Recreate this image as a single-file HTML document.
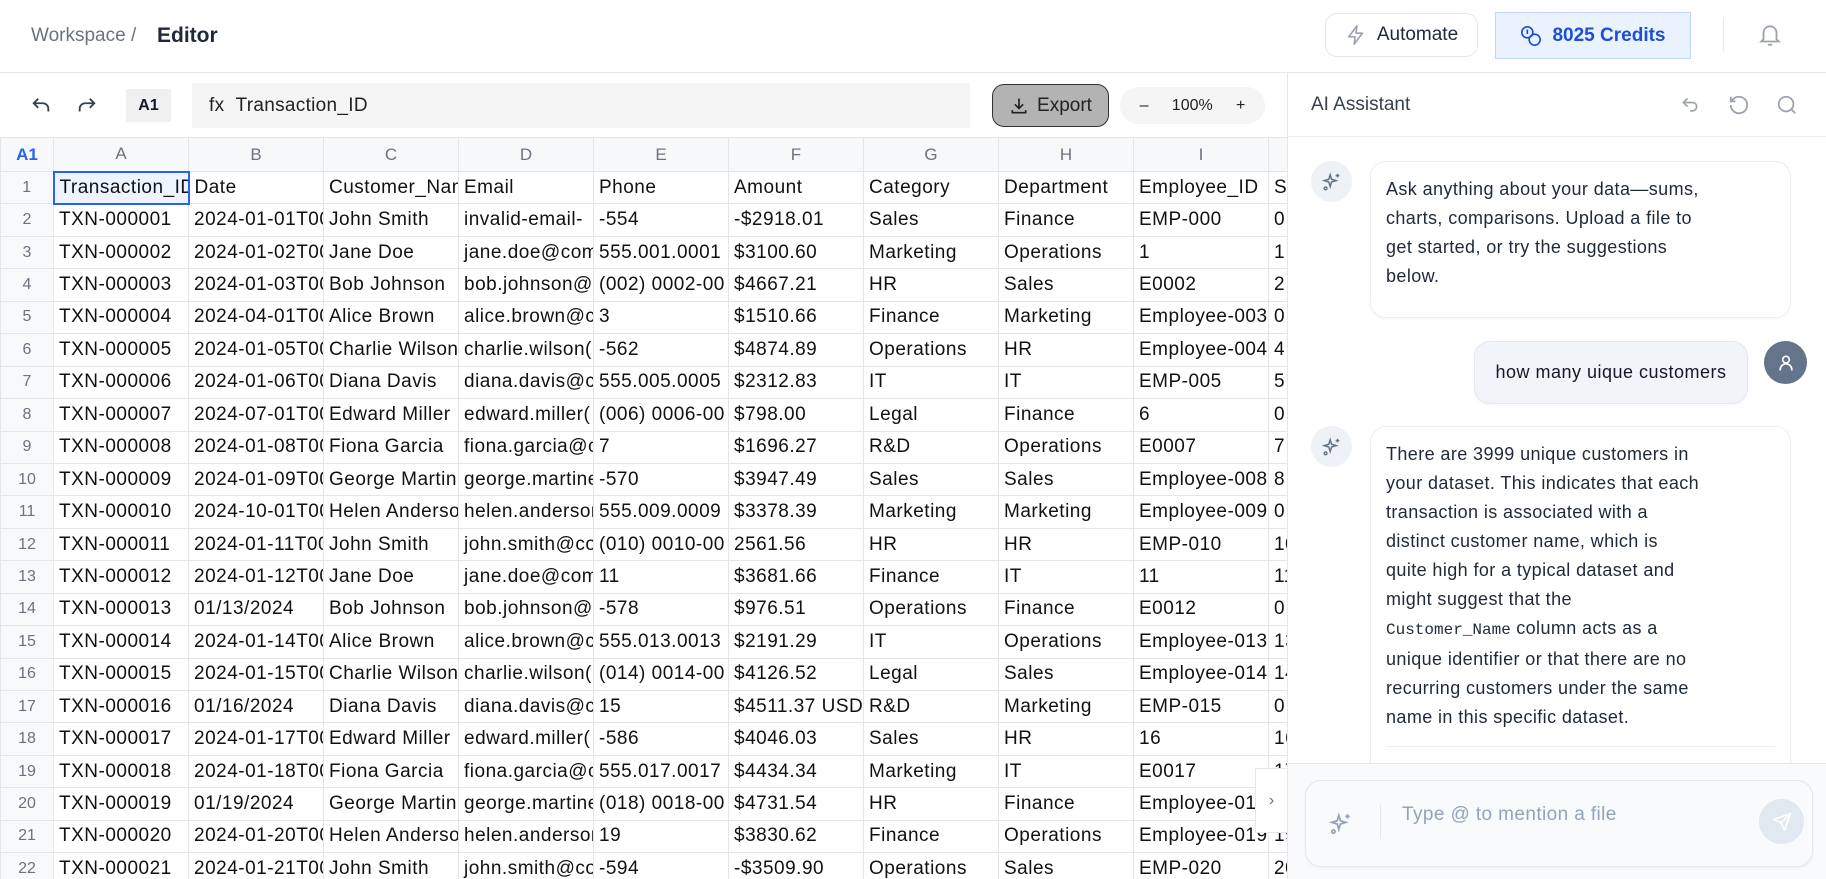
<!DOCTYPE html>
<html><head><meta charset="utf-8"><style>
*{box-sizing:border-box;margin:0;padding:0}
body{width:1826px;height:879px;overflow:hidden;background:#fff;font-family:"Liberation Sans",sans-serif;color:#111827;position:relative}
.abs{position:absolute}
.hdr{left:0;top:0;width:1826px;height:73px;border-bottom:1px solid #e5e7eb}
.btn{display:flex;align-items:center;justify-content:center;gap:10px;font-size:19px}
table{border-collapse:collapse;table-layout:fixed;font-size:19px;letter-spacing:0.5px}
td{height:32.45px;border:1px solid #e3e5e8;white-space:nowrap;overflow:hidden;padding:0 5px;color:#111}
td.rn{background:#f8f9fb;color:#6b7280;text-align:center;padding:0;font-size:16px;letter-spacing:0}
tr.h td{background:#f7f8fa;color:#6b7280;text-align:center;height:34px;font-size:17px;letter-spacing:0}
.panel{left:1287px;top:73px;width:539px;height:806px;background:#fff;border-left:1px solid #e5e7eb}
.av{width:41px;height:41px;border-radius:50%;background:#eef1f6;display:flex;align-items:center;justify-content:center}
.bub{border:1px solid #eceef2;border-radius:16px;background:#fff;font-size:18px;letter-spacing:0.4px;line-height:29px;color:#1f2937;box-shadow:0 1px 3px rgba(0,0,0,.04)}
</style></head><body>
<div class="abs hdr">
  <div class="abs" style="left:31px;top:25px;font-size:19px;color:#6b7280">Workspace /</div>
  <div class="abs" style="left:157px;top:24px;font-size:21px;font-weight:bold;color:#1f2937">Editor</div>
  <div class="abs btn" style="left:1325px;top:13px;width:153px;height:44px;border:1px solid #e5e7eb;border-radius:12px;color:#1f2937">
    <svg width="22" height="22" viewBox="0 0 24 24" fill="none" stroke="#9ca3af" stroke-width="1.8" stroke-linejoin="round"><path d="M13 2L4 14h7l-1 8 9-12h-7l1-8z"/></svg>Automate</div>
  <div class="abs btn" style="left:1495px;top:12px;width:196px;height:47px;border:1px solid #bfd6fb;background:#eaf2fe;color:#1d4ed8;font-weight:bold">
    <svg width="22" height="22" viewBox="0 0 24 24" fill="none" stroke="#1d4ed8" stroke-width="1.8"><circle cx="8" cy="8" r="6"/><circle cx="16" cy="16" r="6"/><path d="M7 6h1v4"/></svg>8025 Credits</div>
  <div class="abs" style="left:1723px;top:18px;width:1px;height:34px;background:#e5e7eb"></div>
  <svg class="abs" style="left:1757px;top:22px" width="26" height="26" viewBox="0 0 24 24" fill="none" stroke="#9ca3af" stroke-width="1.7"><path d="M6 16V10a6 6 0 0 1 12 0v6l2 2H4z"/><path d="M10 21h4"/></svg>
</div>
<!-- toolbar -->
<svg class="abs" style="left:30px;top:95px" width="22" height="22" viewBox="0 0 24 24" fill="none" stroke="#374151" stroke-width="2"><path d="M9 14L4 9l5-5"/><path d="M4 9h10a6 6 0 0 1 6 6v3"/></svg>
<svg class="abs" style="left:76px;top:95px" width="22" height="22" viewBox="0 0 24 24" fill="none" stroke="#374151" stroke-width="2"><path d="M15 14l5-5-5-5"/><path d="M20 9H10a6 6 0 0 0-6 6v3"/></svg>
<div class="abs" style="left:126px;top:89px;width:45px;height:33px;background:#f0f0f0;font-size:16px;font-weight:bold;display:flex;align-items:center;justify-content:center">A1</div>
<div class="abs" style="left:192px;top:83px;width:778px;height:45px;background:#f5f5f5;font-size:19px;letter-spacing:0.3px;display:flex;align-items:center;padding-left:17px;color:#222">fx&nbsp;&nbsp;Transaction_ID</div>
<div class="abs btn" style="left:992px;top:84px;width:117px;height:43px;background:#b3b3b3;border:1.5px solid #333;border-radius:12px;color:#222;gap:8px">
  <svg width="20" height="20" viewBox="0 0 24 24" fill="none" stroke="#222" stroke-width="2"><path d="M12 3v12M7 10l5 5 5-5M4 17v3h16v-3"/></svg>Export</div>
<div class="abs" style="left:1120px;top:87px;width:145px;height:37px;background:#f5f5f5;border-radius:18px;font-size:16px;color:#222;display:flex;align-items:center;justify-content:space-around;padding:0 8px"><span>–</span><span>100%</span><span>+</span></div>
<!-- grid -->
<div class="abs" style="left:0;top:137px;width:1287px;height:742px;overflow:hidden">
<table style="width:1403px">
<colgroup><col style="width:53px"><col style="width:135px"><col style="width:135px"><col style="width:135px"><col style="width:135px"><col style="width:135px"><col style="width:135px"><col style="width:135px"><col style="width:135px"><col style="width:135px"><col style="width:135px"></colgroup>
<tr class="h"><td class="rn" style="color:#2563eb;font-weight:bold;background:#f7f8fa">A1</td><td>A</td><td>B</td><td>C</td><td>D</td><td>E</td><td>F</td><td>G</td><td>H</td><td>I</td><td></td></tr>
<tr><td class="rn">1</td><td style="border:2px solid #2563eb;background:#eef4ff">Transaction_ID</td><td>Date</td><td>Customer_Name</td><td>Email</td><td>Phone</td><td>Amount</td><td>Category</td><td>Department</td><td>Employee_ID</td><td>S</td></tr>
<tr><td class="rn">2</td><td>TXN-000001</td><td>2024-01-01T00</td><td>John Smith</td><td>invalid-email-</td><td>-554</td><td>-$2918.01</td><td>Sales</td><td>Finance</td><td>EMP-000</td><td>0</td></tr>
<tr><td class="rn">3</td><td>TXN-000002</td><td>2024-01-02T00</td><td>Jane Doe</td><td>jane.doe@com</td><td>555.001.0001</td><td>$3100.60</td><td>Marketing</td><td>Operations</td><td>1</td><td>1</td></tr>
<tr><td class="rn">4</td><td>TXN-000003</td><td>2024-01-03T00</td><td>Bob Johnson</td><td>bob.johnson@</td><td>(002) 0002-00</td><td>$4667.21</td><td>HR</td><td>Sales</td><td>E0002</td><td>2</td></tr>
<tr><td class="rn">5</td><td>TXN-000004</td><td>2024-04-01T00</td><td>Alice Brown</td><td>alice.brown@c</td><td>3</td><td>$1510.66</td><td>Finance</td><td>Marketing</td><td>Employee-003</td><td>0</td></tr>
<tr><td class="rn">6</td><td>TXN-000005</td><td>2024-01-05T00</td><td>Charlie Wilson</td><td>charlie.wilson(</td><td>-562</td><td>$4874.89</td><td>Operations</td><td>HR</td><td>Employee-004</td><td>4</td></tr>
<tr><td class="rn">7</td><td>TXN-000006</td><td>2024-01-06T00</td><td>Diana Davis</td><td>diana.davis@c</td><td>555.005.0005</td><td>$2312.83</td><td>IT</td><td>IT</td><td>EMP-005</td><td>5</td></tr>
<tr><td class="rn">8</td><td>TXN-000007</td><td>2024-07-01T00</td><td>Edward Miller</td><td>edward.miller(</td><td>(006) 0006-00</td><td>$798.00</td><td>Legal</td><td>Finance</td><td>6</td><td>0</td></tr>
<tr><td class="rn">9</td><td>TXN-000008</td><td>2024-01-08T00</td><td>Fiona Garcia</td><td>fiona.garcia@c</td><td>7</td><td>$1696.27</td><td>R&amp;D</td><td>Operations</td><td>E0007</td><td>7</td></tr>
<tr><td class="rn">10</td><td>TXN-000009</td><td>2024-01-09T00</td><td>George Martin</td><td>george.martine</td><td>-570</td><td>$3947.49</td><td>Sales</td><td>Sales</td><td>Employee-008</td><td>8</td></tr>
<tr><td class="rn">11</td><td>TXN-000010</td><td>2024-10-01T00</td><td>Helen Anderson</td><td>helen.anderson</td><td>555.009.0009</td><td>$3378.39</td><td>Marketing</td><td>Marketing</td><td>Employee-009</td><td>0</td></tr>
<tr><td class="rn">12</td><td>TXN-000011</td><td>2024-01-11T00</td><td>John Smith</td><td>john.smith@co</td><td>(010) 0010-00</td><td>2561.56</td><td>HR</td><td>HR</td><td>EMP-010</td><td>10</td></tr>
<tr><td class="rn">13</td><td>TXN-000012</td><td>2024-01-12T00</td><td>Jane Doe</td><td>jane.doe@com</td><td>11</td><td>$3681.66</td><td>Finance</td><td>IT</td><td>11</td><td>11</td></tr>
<tr><td class="rn">14</td><td>TXN-000013</td><td>01/13/2024</td><td>Bob Johnson</td><td>bob.johnson@</td><td>-578</td><td>$976.51</td><td>Operations</td><td>Finance</td><td>E0012</td><td>0</td></tr>
<tr><td class="rn">15</td><td>TXN-000014</td><td>2024-01-14T00</td><td>Alice Brown</td><td>alice.brown@c</td><td>555.013.0013</td><td>$2191.29</td><td>IT</td><td>Operations</td><td>Employee-013</td><td>13</td></tr>
<tr><td class="rn">16</td><td>TXN-000015</td><td>2024-01-15T00</td><td>Charlie Wilson</td><td>charlie.wilson(</td><td>(014) 0014-00</td><td>$4126.52</td><td>Legal</td><td>Sales</td><td>Employee-014</td><td>14</td></tr>
<tr><td class="rn">17</td><td>TXN-000016</td><td>01/16/2024</td><td>Diana Davis</td><td>diana.davis@c</td><td>15</td><td>$4511.37 USD</td><td>R&amp;D</td><td>Marketing</td><td>EMP-015</td><td>0</td></tr>
<tr><td class="rn">18</td><td>TXN-000017</td><td>2024-01-17T00</td><td>Edward Miller</td><td>edward.miller(</td><td>-586</td><td>$4046.03</td><td>Sales</td><td>HR</td><td>16</td><td>16</td></tr>
<tr><td class="rn">19</td><td>TXN-000018</td><td>2024-01-18T00</td><td>Fiona Garcia</td><td>fiona.garcia@c</td><td>555.017.0017</td><td>$4434.34</td><td>Marketing</td><td>IT</td><td>E0017</td><td>17</td></tr>
<tr><td class="rn">20</td><td>TXN-000019</td><td>01/19/2024</td><td>George Martin</td><td>george.martine</td><td>(018) 0018-00</td><td>$4731.54</td><td>HR</td><td>Finance</td><td>Employee-018</td><td>18</td></tr>
<tr><td class="rn">21</td><td>TXN-000020</td><td>2024-01-20T00</td><td>Helen Anderson</td><td>helen.anderson</td><td>19</td><td>$3830.62</td><td>Finance</td><td>Operations</td><td>Employee-019</td><td>19</td></tr>
<tr><td class="rn">22</td><td>TXN-000021</td><td>2024-01-21T00</td><td>John Smith</td><td>john.smith@co</td><td>-594</td><td>-$3509.90</td><td>Operations</td><td>Sales</td><td>EMP-020</td><td>20</td></tr>
</table>
</div>
<div class="abs" style="left:1255px;top:768px;width:32px;height:65px;background:#fff;border:1px solid #e5e7eb;border-right:none;display:flex;align-items:center;justify-content:center;color:#6b7280;font-size:16px">›</div>
<!-- panel -->
<div class="abs panel">
  <div class="abs" style="left:0;top:0;width:539px;height:64px;border-bottom:1px solid #eceef1"></div>
  <div class="abs" style="left:23px;top:21px;font-size:19px;color:#374151">AI Assistant</div>
  <svg class="abs" style="left:392px;top:22px" width="20" height="20" viewBox="0 0 24 24" fill="none" stroke="#9ca3af" stroke-width="2"><path d="M9 14L4 9l5-5"/><path d="M4 9h11a5 5 0 0 1 0 10h-3"/></svg>
  <svg class="abs" style="left:440px;top:21px" width="22" height="22" viewBox="0 0 24 24" fill="none" stroke="#9ca3af" stroke-width="2"><path d="M3 12a9 9 0 1 0 3-6.7L3 8"/><path d="M3 3v5h5"/></svg>
  <svg class="abs" style="left:488px;top:21px" width="22" height="22" viewBox="0 0 24 24" fill="none" stroke="#9ca3af" stroke-width="2"><circle cx="11" cy="11" r="8"/><path d="M21 21l-4.3-4.3"/></svg>

  <div class="abs av" style="left:23px;top:88px"><svg width="22" height="22" viewBox="0 0 24 24" fill="none" stroke="#64748b" stroke-width="1.6"><path d="M10 4l1.5 5 5 1.5-5 1.5L10 17l-1.5-5-5-1.5 5-1.5z"/><path d="M18 3v4M16 5h4"/><circle cx="5" cy="19" r="1.5"/></svg></div>
  <div class="abs bub" style="left:82px;top:88px;width:421px;height:157px;padding:13px 15px 0 15px">Ask anything about your data—sums,<br>charts, comparisons. Upload a file to<br>get started, or try the suggestions<br>below.</div>

  <div class="abs bub" style="left:186px;top:268px;width:274px;height:63px;background:#f1f4f9;border-color:#e3e8ef;display:flex;align-items:center;justify-content:center;font-size:18px;letter-spacing:0.5px;color:#111827">how many uique customers</div>
  <div class="abs" style="left:476px;top:268px;width:43px;height:43px;border-radius:50%;background:#64748b;display:flex;align-items:center;justify-content:center"><svg width="20" height="20" viewBox="0 0 24 24" fill="none" stroke="#fff" stroke-width="2"><circle cx="12" cy="8" r="4"/><path d="M5 21v-1a7 7 0 0 1 14 0v1"/></svg></div>

  <div class="abs av" style="left:23px;top:353px"><svg width="22" height="22" viewBox="0 0 24 24" fill="none" stroke="#64748b" stroke-width="1.6"><path d="M10 4l1.5 5 5 1.5-5 1.5L10 17l-1.5-5-5-1.5 5-1.5z"/><path d="M18 3v4M16 5h4"/><circle cx="5" cy="19" r="1.5"/></svg></div>
  <div class="abs bub" style="left:82px;top:353px;width:421px;height:400px;padding:13px 15px 0 15px;border-bottom:none;border-radius:16px 16px 0 0">There are 3999 unique customers in<br>your dataset. This indicates that each<br>transaction is associated with a<br>distinct customer name, which is<br>quite high for a typical dataset and<br>might suggest that the<br><span style="font-family:'Liberation Mono',monospace;font-size:16px;letter-spacing:0">Customer_Name</span> column acts as a<br>unique identifier or that there are no<br>recurring customers under the same<br>name in this specific dataset.
  <div style="margin-top:14px;border-top:1px solid #eceef1"></div></div>

  <div class="abs" style="left:0;top:690px;width:539px;height:116px;background:#f8fafc;border-top:1px solid #e3e8ef"></div>
  <div class="abs" style="left:17px;top:707px;width:508px;height:87px;background:#f8fafc;border:1px solid #e5e7eb;border-radius:16px;box-shadow:0 1px 3px rgba(0,0,0,.05)">
    <svg class="abs" style="left:22px;top:30px" width="26" height="26" viewBox="0 0 24 24" fill="none" stroke="#94a3b8" stroke-width="1.6"><path d="M10 4l1.5 5 5 1.5-5 1.5L10 17l-1.5-5-5-1.5 5-1.5z"/><path d="M18 3v4M16 5h4"/><circle cx="5" cy="19" r="1.5"/></svg>
    <div class="abs" style="left:74px;top:24px;width:1px;height:34px;background:#e2e8f0"></div>
    <div class="abs" style="left:96px;top:23px;font-size:19px;letter-spacing:0.4px;color:#94a3b8">Type @ to mention a file</div>
    <div class="abs" style="left:453px;top:18px;width:45px;height:45px;border-radius:50%;background:#e2e8f0;display:flex;align-items:center;justify-content:center"><svg width="20" height="20" viewBox="0 0 24 24" fill="none" stroke="#fff" stroke-width="2" stroke-linejoin="round"><path d="M22 2L11 13M22 2l-7 20-4-9-9-4z"/></svg></div>
  </div>
</div>
</body></html>
